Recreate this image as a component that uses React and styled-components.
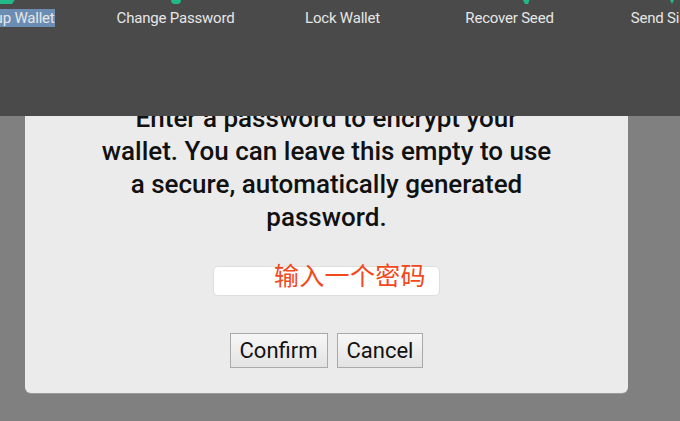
import React from "react";
import styled, { createGlobalStyle } from "styled-components";

const Global = createGlobalStyle`
  html, body { margin: 0; padding: 0; background: #808080; }
  body { font-family: Roboto, "Noto Sans", "Noto Sans CJK SC", sans-serif; overflow: hidden; }
  #root { width: 680px; height: 421px; }
`;

const Page = styled.div`
  position: relative;
  width: 680px;
  height: 421px;
  background: #808080;
  overflow: hidden;
`;

const Header = styled.header`
  position: absolute;
  top: 0;
  left: 0;
  right: 0;
  height: 116px;
  background: #4a4a4a;
  z-index: 2;
  overflow: hidden;
`;

const Nav = styled.nav`
  display: flex;
  margin-left: -75px;
`;

const NavItem = styled.div`
  flex: 0 0 167px;
  display: flex;
  flex-direction: column;
  align-items: center;
`;

const IconSlot = styled.div`
  height: 24px;
  margin-top: -20px;
  display: flex;
  justify-content: center;
  transform: translateX(${(p) => p.$dx || 0}px);
`;

const Label = styled.span`
  margin-top: 5px;
  font-size: 15px;
  line-height: 18px;
  color: #e6e6e6;
  white-space: nowrap;
  letter-spacing: -0.2px;
  background: ${(p) => (p.$selected ? "#6c8db3" : "transparent")};
`;

const Stage = styled.div`
  padding: 80px 52px 0 25px;
`;

const Modal = styled.section`
  width: 603px;
  background: #ebebeb;
  border-radius: 0 0 6px 6px;
  box-shadow: 0 1px 0 #9a9a9a;
  padding: 22px 0 25px;
  display: flex;
  flex-direction: column;
  align-items: center;
`;

const Message = styled.p`
  margin: 0;
  text-align: center;
  font-size: 26px;
  font-weight: 500;
  line-height: 33px;
  color: #111;
  letter-spacing: 0;
`;

const Field = styled.div`
  position: relative;
  margin-top: 32px;
  width: 227px;
  height: 30px;
`;

const Input = styled.input`
  box-sizing: border-box;
  width: 100%;
  height: 100%;
  border: 1px solid #dedede;
  border-radius: 5px;
  background: #fff;
  outline: none;
`;

const Annotation = styled.span`
  position: absolute;
  left: 61px;
  top: -8px;
  font-family: "Noto Sans CJK SC", sans-serif;
  font-size: 25px;
  line-height: 32px;
  color: #f2481c;
  white-space: nowrap;
  letter-spacing: 0.3px;
`;

const Actions = styled.div`
  margin-top: 37px;
  display: flex;
  gap: 9px;
`;

const Button = styled.button`
  height: 35px;
  padding: 0 9px;
  font-family: Roboto, sans-serif;
  font-size: 22px;
  color: #111;
  background: linear-gradient(#f7f7f7, #e3e3e3);
  border: 1px solid #a9a9a9;
  border-radius: 0;
`;

const Blob = ({ w, d }) => (
  <svg width={w} height="24" viewBox={`0 0 ${w} 24`}>
    <path d={d} fill="#22b98a" />
  </svg>
);

const items = [
  { label: "Backup Wallet", selected: true, icon: <Blob w={30} d="M0 14h22l4 4-4 6H0z" />, dx: -4 },
  { label: "Change Password", icon: <Blob w={14} d="M2 10h10v10a4 4 0 0 1-4 4H6a4 4 0 0 1-4-4z" /> },
  { label: "Lock Wallet", icon: null },
  { label: "Recover Seed", icon: <Blob w={14} d="M2 16h10l-3 8h-3z" />, dx: 16 },
  { label: "Send Siacoins", icon: <Blob w={14} d="M4 16h8l-4 8z" />, dx: -6 },
];

export default function App() {
  return (
    <Page>
      <Global />
      <Header>
        <Nav>
          {items.map((it) => (
            <NavItem key={it.label}>
              <IconSlot $dx={it.dx}>{it.icon}</IconSlot>
              <Label $selected={it.selected}>{it.label}</Label>
            </NavItem>
          ))}
        </Nav>
      </Header>
      <Stage>
        <Modal>
          <Message>
            Enter a password to encrypt your
            <br />
            wallet. You can leave this empty to use
            <br />
            a secure, automatically generated
            <br />
            password.
          </Message>
          <Field>
            <Input type="password" />
            <Annotation>输入一个密码</Annotation>
          </Field>
          <Actions>
            <Button>Confirm</Button>
            <Button>Cancel</Button>
          </Actions>
        </Modal>
      </Stage>
    </Page>
  );
}
